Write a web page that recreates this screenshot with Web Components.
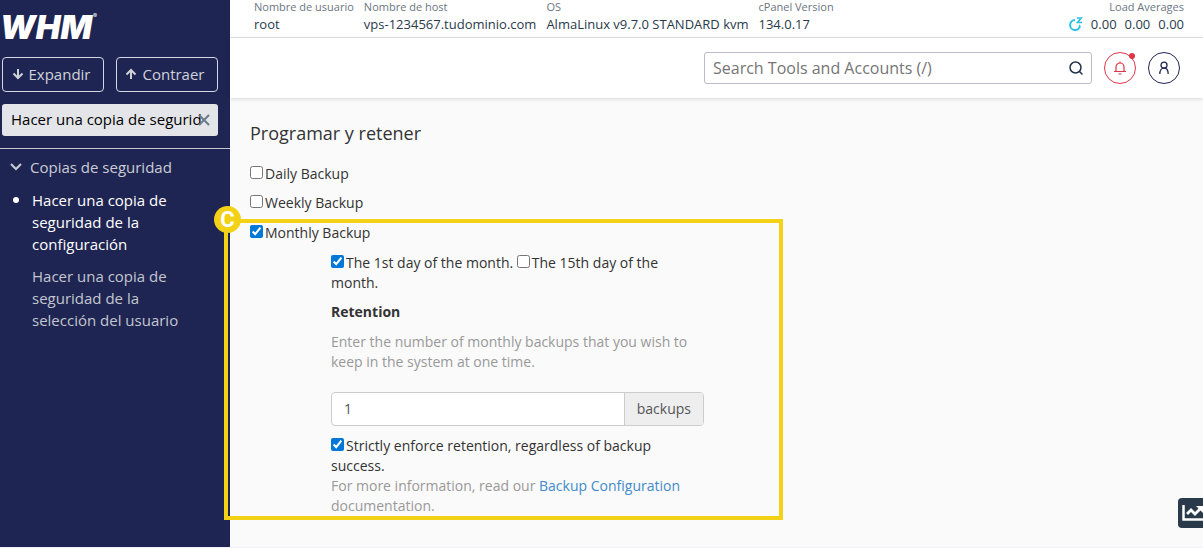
<!DOCTYPE html>
<html lang="es">
<head>
<meta charset="utf-8">
<meta name="viewport" content="width=device-width, initial-scale=1">
<title>WHM - Configuración de copias de seguridad</title>
<style>
  html, body { margin: 0; }
  body { font-family: "Open Sans", "Noto Sans", sans-serif; font-size: 14px; line-height: 20px; color: #333; background: #fafafa; }
</style>
</head>
<body>
<whm-app>
  <whm-sidebar slot="sidebar">
    <nav-group label="Copias de seguridad">
      <nav-item current>Hacer una copia de seguridad de la configuración</nav-item>
      <nav-item>Hacer una copia de seguridad de la selección del usuario</nav-item>
    </nav-group>
  </whm-sidebar>
  <status-bar>
    <status-field label="Nombre de usuario">root</status-field>
    <status-field label="Nombre de host">vps-1234567.tudominio.com</status-field>
    <status-field label="OS">AlmaLinux v9.7.0 STANDARD kvm</status-field>
    <status-field label="cPanel Version">134.0.17</status-field>
    <load-averages slot="end" values="0.00 0.00 0.00"></load-averages>
  </status-bar>
  <top-header></top-header>
  <backup-schedule></backup-schedule>
  <stats-button slot="floating"></stats-button>
</whm-app>

<script>
const define = (name, html, setup) => {
  const template = document.createElement('template');
  template.innerHTML = html;
  customElements.define(name, class extends HTMLElement {
    constructor() {
      super();
      this.attachShadow({ mode: 'open' }).append(template.content.cloneNode(true));
    }
    connectedCallback() { if (setup) setup(this, this.shadowRoot); }
  });
};

define('whm-app', `
  <style>
    :host { display: flex; min-height: 100vh; box-sizing: border-box; border-bottom: 1px solid #f0f1f4; }
    main { flex: 1; min-width: 0; }
  </style>
  <slot name="sidebar"></slot>
  <main><slot></slot></main>
  <slot name="floating"></slot>`);

define('whm-logo', `
  <style>
    :host { display: block; height: 28px; }
    svg { display: block; overflow: visible; }
    text { fill: #fff; font-family: Inter, sans-serif; }
    .name { font-size: 33px; font-weight: 900; font-style: italic; }
    .mark { font-size: 6px; }
  </style>
  <svg width="98" height="28" viewBox="0 0 98 28" role="img" aria-label="WHM">
    <text class="name" x="-2" y="26">WHM</text><text class="mark" x="91" y="5">®</text>
  </svg>`);

define('outline-button', `
  <style>
    :host { display: block; flex: 1; min-width: 0; }
    button { display: flex; align-items: center; justify-content: center; gap: 5px; width: 100%; height: 35px; padding: 0 4px 2px 0; box-sizing: border-box;
      border: 1px solid #d5d8e0; border-radius: 4px; background: none; color: #d0d2da; font: inherit; cursor: pointer; }
    svg { width: 12px; height: 12px; fill: none; stroke: currentColor; stroke-width: 2; }
  </style>
  <button type="button"><svg viewBox="0 0 12 12" aria-hidden="true"><path/></svg><slot></slot></button>`,
  (el, root) => root.querySelector('path').setAttribute('d',
    el.getAttribute('icon') === 'down' ? 'M6 1v9M1.500 5.500L6 10l4.500-4.500' : 'M6 11V2M1.500 6.500L6 2l4.500 4.500'));

define('whm-sidebar', `
  <style>
    :host { display: block; flex: none; width: 230px; background: #1f2552; color: #c9ccd6; font-size: 15px; line-height: 22px; }
    header { display: flex; flex-direction: column; padding: 13px 12px 12px 2px; border-bottom: 1px solid #c5c8d0; }
    .actions { display: flex; gap: 12px; margin: 16px 0 12px; }
    .search { position: relative; display: flex; }
    input { flex: 1; min-width: 0; height: 32px; box-sizing: border-box; padding: 0 16px 2px 9px; border: 0; border-radius: 3px; background: #e3e5e9; color: #000; font: inherit; }
    .clear { position: absolute; right: 8px; top: 10px; width: 12px; height: 12px; padding: 0; border: 0; background: none; color: #6c7a89; cursor: pointer; }
    .clear svg { display: block; width: 12px; height: 12px; fill: none; stroke: currentColor; stroke-width: 2; }
  </style>
  <header>
    <whm-logo></whm-logo>
    <div class="actions"><outline-button icon="down">Expandir</outline-button><outline-button icon="up">Contraer</outline-button></div>
    <div class="search">
      <input type="text" aria-label="Buscar herramientas" value="Hacer una copia de seguridad">
      <button class="clear" type="button" aria-label="Borrar"><svg viewBox="0 0 12 12"><path d="M1 1l10 10M11 1L1 11"/></svg></button>
    </div>
  </header>
  <nav><slot></slot></nav>`);

define('nav-group', `
  <style>
    :host { display: block; padding: 7px 38px 8px 10px; }
    button { display: flex; align-items: center; gap: 8px; padding: 0; border: 0; background: none; color: inherit; font: inherit; white-space: nowrap; cursor: pointer; }
    svg { width: 12px; height: 8px; fill: none; stroke: currentColor; stroke-width: 2; }
    div { display: flex; flex-direction: column; gap: 10px; margin-top: 11px; }
  </style>
  <button type="button" aria-expanded="true"><svg viewBox="0 0 12 8" aria-hidden="true"><path d="M1 1l5 5 5-5"/></svg><span></span></button>
  <div><slot></slot></div>`,
  (el, root) => root.querySelector('span').textContent = el.getAttribute('label'));

define('nav-item', `
  <style>
    :host { display: block; }
    a { display: grid; grid-template-columns: 22px 1fr; color: #c3c6d0; text-decoration: none; }
    i { width: 6px; height: 6px; margin: 8px 0 0 3px; border-radius: 50%; }
    :host([current]) a { color: #fff; }
    :host([current]) i { background: #fff; }
  </style>
  <a href="#"><i></i><span><slot></slot></span></a>`);

define('status-bar', `
  <style>
    :host { display: flex; justify-content: space-between; height: 37px; padding: 0 19px 0 24px; background: #fff; border-bottom: 1px solid #e3e4e6; font-size: 13px; line-height: 18px; color: #293a4a; }
    div { display: flex; gap: 10px; }
  </style>
  <div><slot></slot></div><slot name="end"></slot>`);

define('status-field', `
  <style>
    :host { display: block; white-space: nowrap; }
    small { display: block; font-size: 11px; line-height: 14px; margin-bottom: 1px; color: #6b7681; }
  </style>
  <small></small><slot></slot>`,
  (el, root) => root.querySelector('small').textContent = el.getAttribute('label'));

define('load-averages', `
  <style>
    :host { display: block; text-align: right; white-space: nowrap; }
    small { display: block; font-size: 11px; line-height: 14px; margin-bottom: 1px; color: #6b7681; }
    div { display: flex; align-items: center; gap: 8px; }
    svg { width: 14px; height: 14px; fill: none; stroke: #2bbfea; stroke-width: 2; }
  </style>
  <small>Load Averages</small>
  <div><svg viewBox="0 0 14 14" aria-hidden="true"><path d="M6 3a5 5 0 1 0 5 6M10 8.500l1 .5"/><path stroke-width="1.600" d="M8 1h4.200L8.500 5.500h4.500"/></svg></div>`,
  (el, root) => el.getAttribute('values').split(' ').forEach(v => {
    const span = document.createElement('span');
    span.textContent = v;
    root.querySelector('div').append(span);
  }));

define('top-header', `
  <style>
    :host { display: flex; align-items: center; justify-content: flex-end; gap: 12px; height: 60px; padding: 0 23px; background: #fff; box-shadow: 0 1px 4px rgba(0,0,0,.14); }
    form { display: flex; flex: 0 1 388px; height: 32px; box-sizing: border-box; border: 1px solid #b9bacb; border-radius: 3px; }
    input { flex: 1; min-width: 0; padding: 0 8px; border: 0; background: none; font: inherit; font-size: 16px; color: #293a4a; }
    input::placeholder { color: #757575; opacity: 1; }
    form button { width: 31px; padding: 0; border: 0; background: none; color: #22344a; }
    svg { display: block; margin: auto; fill: none; stroke: currentColor; }
    .round { position: relative; width: 32px; height: 32px; padding: 0; border: 1px solid #1f2552; border-radius: 50%; background: #fff; color: #1f2552; }
    .alert { border-color: #dc3545; color: #dc3545; }
    .alert i { position: absolute; right: 0; top: 0; width: 6px; height: 6px; border-radius: 50%; background: #dc3545; }
  </style>
  <form role="search">
    <input type="text" aria-label="Search Tools and Accounts" placeholder="Search Tools and Accounts (/)">
    <button type="button" aria-label="Search"><svg width="14" height="14" viewBox="0 0 14 14" stroke-width="1.500"><circle cx="6.500" cy="6.500" r="5.500"/><path d="M10.500 10.500l3 3"/></svg></button>
  </form>
  <button class="round alert" type="button" aria-label="Notifications"><svg width="14" height="14" viewBox="0 0 14 14" stroke-width="1.200"><path d="M1 10.500h12M3 10.500V6a4 4 0 0 1 8 0v4.500M7 2V.5M5.500 13h3"/></svg><i></i></button>
  <button class="round" type="button" aria-label="Account"><svg width="14" height="14" viewBox="0 0 14 14" stroke-width="1.300"><circle cx="7" cy="4.200" r="3"/><path d="M2.800 13c0-3.500 1.500-5.800 4.200-5.800s4.200 2.300 4.200 5.800"/></svg></button>`);

define('check-field', `
  <style>
    :host { display: inline; }
    input { width: 13px; height: 13px; margin: 0 2px 0 0; vertical-align: 0; accent-color: #0078d7; }
  </style>
  <label><input type="checkbox"><slot></slot></label>`,
  (el, root) => root.querySelector('input').checked = el.hasAttribute('checked'));

define('callout-frame', `
  <style>
    :host { display: block; position: relative; padding-top: 1px; }
    .frame { position: absolute; inset: -3px -5px -4px -26px; border: 4px solid #f2d116; pointer-events: none; }
    .tag { position: absolute; left: -14px; top: -17px; width: 27px; height: 27px; border-radius: 50%; background: #f2d116; color: #fff; font-family: Roboto, sans-serif; font-size: 22px; font-weight: 700; line-height: 27px; text-align: center; }
  </style>
  <slot></slot>
  <div class="frame"><span class="tag"></span></div>`,
  (el, root) => root.querySelector('.tag').textContent = el.getAttribute('tag'));

define('backup-schedule', `
  <style>
    :host { display: block; padding: 24px 20px 28px; }
    h2 { margin: 0 0 20px; font-size: 18px; line-height: 22px; font-weight: 400; }
    .option { margin-bottom: 9px; }
    callout-frame { max-width: 528px; }
    .details { max-width: 373px; margin-left: 81px; }
    p { margin: 0; color: #999; }
    .days { margin: 10px 0 9px; }
    .title { display: block; margin-bottom: 10px; font-weight: 700; }
    .count { display: flex; height: 34px; margin: 20px 0 10px; box-sizing: border-box; border: 1px solid #ccc; border-radius: 4px; overflow: hidden; background: #fff; }
    .count input { flex: 1; min-width: 0; padding: 0 12px; border: 0; background: none; color: #555; font: inherit; }
    .count span { padding: 6px 12px; border-left: 1px solid #ccc; background: #eee; color: #555; }
    a { color: #428bca; text-decoration: none; }
  </style>
  <h2>Programar y retener</h2>
  <div class="option"><check-field>Daily Backup</check-field></div>
  <div class="option"><check-field>Weekly Backup</check-field></div>
  <callout-frame tag="C">
    <check-field checked>Monthly Backup</check-field>
    <div class="details">
      <div class="days"><check-field checked>The 1st day of the month.</check-field> <check-field>The 15th day of the month.</check-field></div>
      <label class="title" for="retention">Retention</label>
      <p>Enter the number of monthly backups that you wish to keep in the system at one time.</p>
      <div class="count"><input id="retention" type="text" value="1"><span>backups</span></div>
      <check-field checked>Strictly enforce retention, regardless of backup success.</check-field>
      <p>For more information, read our <a href="#">Backup Configuration</a> documentation.</p>
    </div>
  </callout-frame>`);

define('stats-button', `
  <style>
    :host { display: block; position: fixed; right: 0; bottom: 20px; }
    button { display: block; width: 25px; height: 30px; padding: 0; border: 0; border-radius: 4px 0 0 4px; background: #293a4a; overflow: hidden; }
    svg { display: block; margin-left: 4px; fill: none; stroke: #fff; }
  </style>
  <button type="button" aria-label="Statistics"><svg width="24" height="18" viewBox="0 0 24 18"><path stroke-width="2.500" d="M1.500 1v14.500H24"/><path stroke-width="2.800" d="M5 10l4-4 4 4 5-5"/><path fill="#fff" stroke="none" d="M14 2h7v7z"/></svg></button>`);
</script>
</body>
</html>
